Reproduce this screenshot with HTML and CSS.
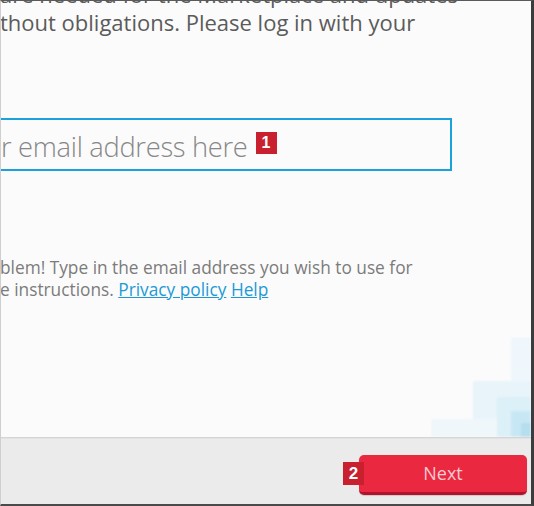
FILE: index.html
```html
<!DOCTYPE html>
<html lang="en">
<head>
<meta charset="utf-8">
<title>Sign in</title>
<link rel="stylesheet" href="styles.css">
</head>
<body>
<div class="window">
  <main class="content">
    <p class="intro">are needed for the Marketplace and updates<br>thout obligations. Please log in with your</p>
    <div class="field">
      <span class="placeholder">r email address here</span>
      <span class="badge">1</span>
    </div>
    <p class="help">blem! Type in the email address you wish to use for<br>e instructions. <a href="#" class="link">Privacy policy</a> <a href="#" class="link">Help</a></p>
    <svg class="deco" width="100" height="100" viewBox="0 0 100 100" aria-hidden="true">
      <defs>
        <filter id="soft" x="-10%" y="-10%" width="120%" height="120%"><feGaussianBlur stdDeviation="1.2"/></filter>
      </defs>
      <g filter="url(#soft)">
        <rect x="80" y="0" width="20" height="100" fill="#eff7fc"/>
        <rect x="42" y="44" width="58" height="56" fill="#e8f4fa"/>
        <rect x="0" y="82" width="100" height="18" fill="#f0f7fb"/>
        <rect x="66" y="60" width="34" height="40" fill="#dcf0f8"/>
        <rect x="80" y="74" width="20" height="26" fill="#c8e7f4"/>
        <rect x="90" y="86" width="10" height="14" fill="#b6deef"/>
      </g>
    </svg>
  </main>
  <footer class="footer">
    <span class="badge badge-footer">2</span>
    <button class="next" type="button">Next</button>
  </footer>
</div>
</body>
</html>
```

FILE: styles.css
```css
* { box-sizing: border-box; }

html, body {
  margin: 0;
  padding: 0;
  background: #3a3a3a;
}

body {
  font-family: "Open Sans", "Noto Sans", "Liberation Sans", sans-serif;
}

.window {
  width: 534px;
  height: 506px;
  display: flex;
  flex-direction: column;
  border-top: 1px solid #5a5a5a;
  border-right: 3px solid #3c3c3c;
  border-bottom: 2px solid #4a4a4a;
  border-left: 1px solid #cfcfcf;
  background: #fbfbfb;
  overflow: hidden;
}

.content {
  position: relative;
  flex: 1;
  background: #fbfbfb;
  overflow: hidden;
}

.intro {
  margin: -21px 0 0 -1px;
  font-size: 22px;
  line-height: 28px;
  color: #5b5b5b;
  white-space: nowrap;
}

.field {
  display: flex;
  align-items: center;
  margin: 82px 0 0 -10px;
  width: 461px;
  height: 53px;
  border: 2px solid #1ba2dc;
  padding: 3px 0 0 8px;
  gap: 8px;
}

.placeholder {
  font-size: 27.3px;
  font-weight: 300;
  color: #878787;
  letter-spacing: -0.3px;
  white-space: nowrap;
}

.badge {
  display: inline-flex;
  align-items: center;
  justify-content: center;
  width: 21px;
  height: 22px;
  background: #c9202f;
  color: #ffffff;
  font-family: "Liberation Sans", "Open Sans", sans-serif;
  font-weight: bold;
  font-size: 16px;
  line-height: 1;
  margin-top: -7px;
}

.help {
  margin: 86px 0 0 -1px;
  font-size: 17.3px;
  line-height: 22px;
  color: #7b7b7b;
  white-space: nowrap;
}

.link {
  color: #1b9ad6;
  text-decoration: underline;
}

.deco {
  position: absolute;
  right: 0;
  bottom: 0;
}

.footer {
  height: 67px;
  flex: none;
  display: flex;
  justify-content: flex-end;
  align-items: flex-start;
  padding: 17px 4px 0 0;
  background: #eaebea;
  border-top: 1px solid #d4d5d4;
  box-shadow: inset 0 1px 0 #e2e3e2;
}

.badge-footer {
  position: relative;
  z-index: 1;
  margin: 7px -5px 0 0;
  width: 21px;
  height: 23px;
  font-size: 17px;
}

.next {
  width: 168px;
  height: 40px;
  border: none;
  border-bottom: 3px solid #b2122c;
  border-radius: 5px;
  background: #ea2840;
  color: #f7cbd2;
  font-family: "Open Sans", "Noto Sans", sans-serif;
  font-size: 18px;
  padding: 0 0 2px 0;
  box-shadow: 0 1px 1px rgba(0, 0, 0, 0.15);
}
```
